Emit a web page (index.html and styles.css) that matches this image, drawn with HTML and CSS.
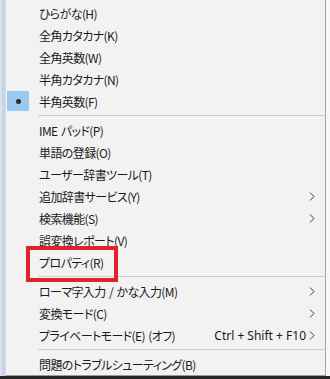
FILE: index.html
```html
<!DOCTYPE html>
<html lang="ja">
<head>
    <meta charset="UTF-8">
    <title>IME メニュー</title>
    <link rel="stylesheet" href="styles.css">
</head>
<body>
    <div class="screen">
        <div class="desk">
            <div class="edge"></div>
            <div class="menu">
                <ul class="menu-list">
                    <li class="item"><span class="check"></span><span class="label">ひらがな(H)</span></li>
                    <li class="item"><span class="check"></span><span class="label">全角カタカナ(K)</span></li>
                    <li class="item"><span class="check"></span><span class="label">全角英数(W)</span></li>
                    <li class="item"><span class="check"></span><span class="label">半角カタカナ(N)</span></li>
                    <li class="item"><span class="check on"><span class="dot"></span></span><span class="label">半角英数(F)</span></li>
                    <li class="sep"></li>
                    <li class="item"><span class="check"></span><span class="label">IME パッド(P)</span></li>
                    <li class="item"><span class="check"></span><span class="label">単語の登録(O)</span></li>
                    <li class="item"><span class="check"></span><span class="label">ユーザー辞書ツール(T)</span></li>
                    <li class="item"><span class="check"></span><span class="label">追加辞書サービス(Y)</span><span class="arrow"><svg width="6" height="9" viewBox="0 0 6 9"><polyline points="1,0.5 5,4.5 1,8.5" fill="none" stroke="#3c3c3c" stroke-width="1"/></svg></span></li>
                    <li class="item"><span class="check"></span><span class="label">検索機能(S)</span><span class="arrow"><svg width="6" height="9" viewBox="0 0 6 9"><polyline points="1,0.5 5,4.5 1,8.5" fill="none" stroke="#3c3c3c" stroke-width="1"/></svg></span></li>
                    <li class="item"><span class="check"></span><span class="label">誤変換レポート(V)</span></li>
                    <li class="item marked"><span class="check"></span><span class="label">プロパティ(R)</span><span class="mark-box"></span></li>
                    <li class="sep"></li>
                    <li class="item"><span class="check"></span><span class="label">ローマ字入力 / かな入力(M)</span><span class="arrow"><svg width="6" height="9" viewBox="0 0 6 9"><polyline points="1,0.5 5,4.5 1,8.5" fill="none" stroke="#3c3c3c" stroke-width="1"/></svg></span></li>
                    <li class="item"><span class="check"></span><span class="label">変換モード(C)</span><span class="arrow"><svg width="6" height="9" viewBox="0 0 6 9"><polyline points="1,0.5 5,4.5 1,8.5" fill="none" stroke="#3c3c3c" stroke-width="1"/></svg></span></li>
                    <li class="item"><span class="check"></span><span class="label">プライベートモード(E) (オフ)</span><span class="shortcut">Ctrl + Shift + F10</span><span class="arrow"><svg width="6" height="9" viewBox="0 0 6 9"><polyline points="1,0.5 5,4.5 1,8.5" fill="none" stroke="#3c3c3c" stroke-width="1"/></svg></span></li>
                    <li class="sep"></li>
                    <li class="item"><span class="check"></span><span class="label">問題のトラブルシューティング(B)</span></li>
                </ul>
            </div>
            <div class="side"></div>
        </div>
        <div class="taskbar"></div>
    </div>
</body>
</html>
```

FILE: styles.css
```css
body {
    margin: 0;
    font-family: "Noto Sans CJK JP", "Noto Sans", sans-serif;
    font-size: 12px;
    color: #1a1a1a;
    background-color: #2a2a2a;
}
.screen {
    display: flex;
    flex-direction: column;
    width: 330px;
    height: 379px;
    overflow: hidden;
}
.desk {
    display: flex;
    flex: 0 0 376px;
}
.edge {
    width: 6px;
    background: linear-gradient(to right, #dfe5ee, #c3d1e6 60%, #d3dcea);
}
.menu {
    width: 319px;
    background-color: #f2f2f2;
    border-right: 1px solid #a6a6a6;
    border-bottom: 1px solid #9a9a9a;
}
.side {
    flex: 1;
    background-color: #f7f7f7;
}
.taskbar {
    flex: 1;
    background-color: #262626;
}
.menu-list {
    list-style-type: none;
    margin: 0;
    padding: 2px 0 0 0;
}
.item {
    position: relative;
    display: flex;
    align-items: center;
    height: 22px;
    padding-right: 10px;
    font-feature-settings: "palt";
    letter-spacing: -0.6px;
    word-spacing: 1.2px;
    white-space: nowrap;
}
.check {
    flex: 0 0 22px;
    height: 20px;
    margin: 0 10px 0 1px;
    display: flex;
    align-items: center;
    justify-content: center;
}
.check.on {
    background-color: #99c9f1;
}
.dot {
    width: 5px;
    height: 5px;
    border-radius: 50%;
    background-color: #2b2b2b;
}
.label {
    flex-grow: 1;
}
.shortcut {
    margin-right: 3px;
    font-family: "Noto Sans", sans-serif;
    letter-spacing: 0;
    word-spacing: 0;
}
.arrow {
    display: flex;
    width: 6px;
}
.sep {
    height: 1px;
    margin: 3px 0 3px 32px;
    background-color: #cfcfcf;
}
/* red annotation around the properties item */
.mark-box {
    position: absolute;
    left: 20px;
    top: -5px;
    width: 84px;
    height: 28px;
    border: 4px solid #e0222c;
}
```
